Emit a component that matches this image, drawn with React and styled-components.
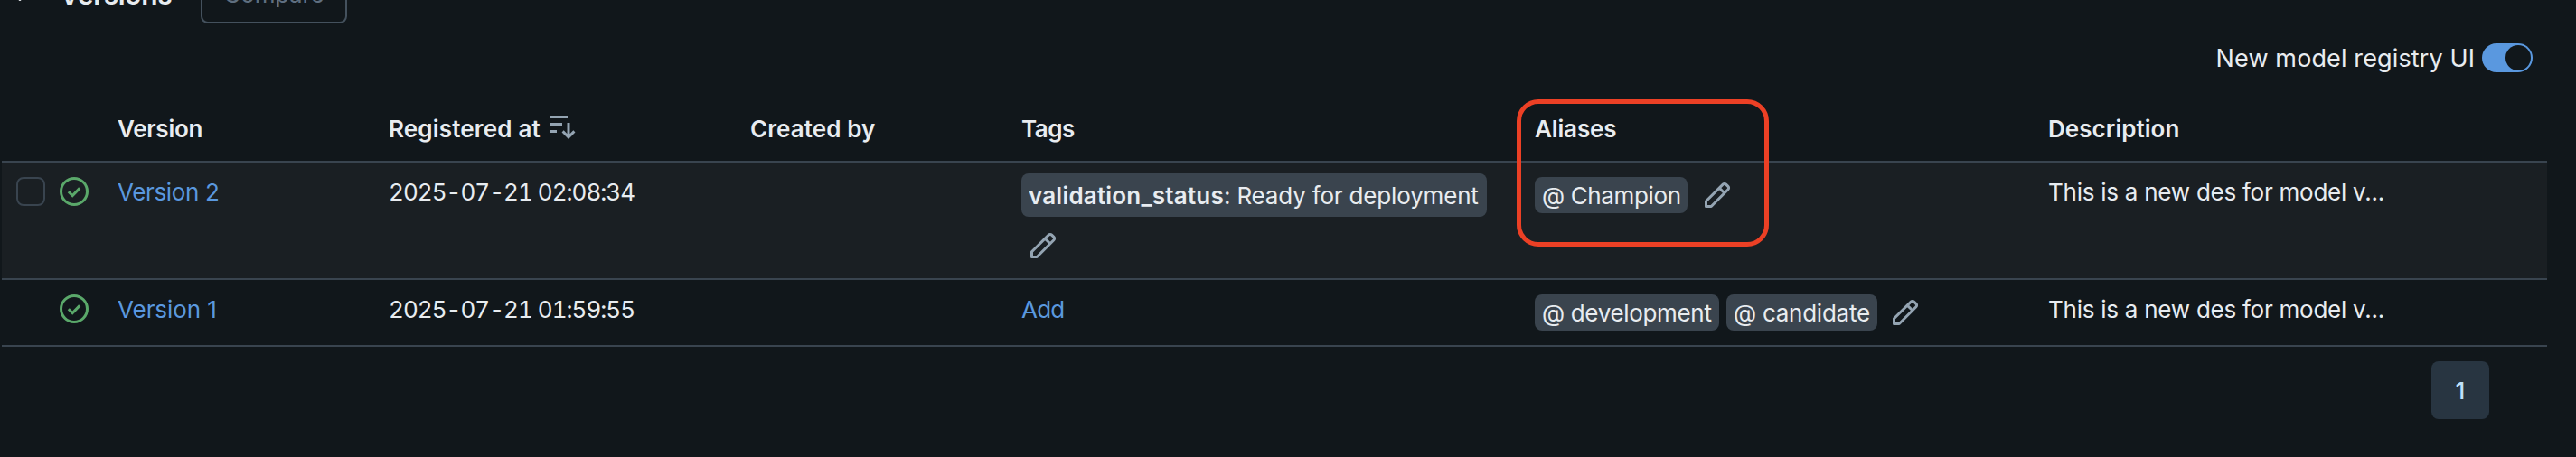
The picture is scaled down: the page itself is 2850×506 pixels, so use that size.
import React from "react";
import styled, { createGlobalStyle } from "styled-components";

const c = {
  bg: "#11171b",
  rowBg: "#1a1f23",
  text: "#e8ecf0",
  link: "#5a98df",
  line: "#39444f",
  badge: "#3a444e",
  icon: "#94a4b2",
  green: "#5aa86a",
  red: "#ec4025",
};

const Global = createGlobalStyle`
  body { margin: 0; background: ${c.bg}; }
  * { box-sizing: border-box; }
`;

const Page = styled.div`
  position: relative;
  width: 2850px;
  height: 506px;
  overflow: hidden;
  background: ${c.bg};
  color: ${c.text};
  font: 400 26px/40px Inter, "Liberation Sans", sans-serif;
  white-space: nowrap;
`;

const Toolbar = styled.header`
  display: flex;
  align-items: center;
  height: 64px;
  margin-top: -38px;
  padding-left: 12px;
`;

const Chevron = styled.svg`
  width: 20px;
  height: 12px;
  margin-top: 4px;
  flex: none;
`;

const Title = styled.h2`
  width: 156px;
  margin: 0 0 0 34px;
  font-size: 30px;
  font-weight: 600;
  line-height: 40px;
  letter-spacing: -0.35px;
`;

const CompareButton = styled.button`
  width: 162px;
  height: 64px;
  padding: 0;
  border: 2px solid #44515d;
  border-radius: 8px;
  background: transparent;
  color: #5f6f80;
  font: inherit;
  letter-spacing: -0.25px;
`;

const ToggleRow = styled.div`
  display: flex;
  align-items: center;
  justify-content: flex-end;
  gap: 8px;
  height: 32px;
  margin: 22px 48px 0 0;
  font-size: 27px;
`;

const ToggleLabel = styled.span`
  padding-top: 1px;
  letter-spacing: 0.12px;
`;

const Switch = styled.span`
  display: flex;
  justify-content: flex-end;
  width: 56px;
  height: 32px;
  padding: 2px;
  border-radius: 16px;
  background: ${c.link};
`;

const Knob = styled.span`
  width: 28px;
  height: 28px;
  border-radius: 50%;
  background: ${c.bg};
`;

const Table = styled.div`
  width: 2816px;
  margin: 0 0 0 2px;
`;

const Row = styled.div`
  display: grid;
  grid-template-columns: 128px 300px 400px 300px 568px 568px 1fr;
  height: ${(p) => p.$height}px;
  padding-top: ${(p) => p.$top}px;
  border-bottom: 2px solid ${c.line};
  background: ${(p) => (p.$active ? c.rowBg : "transparent")};
  font-weight: ${(p) => (p.$head ? 600 : 400)};
`;

const Cell = styled.div`
  line-height: 42px;
  letter-spacing: ${(p) => p.$spacing || 0}px;
`;

const DateCell = styled(Cell)`
  font-variant-numeric: tabular-nums;
`;

const HeadCell = styled.div`
  display: flex;
  gap: 10px;
  letter-spacing: ${(p) => p.$spacing || 0}px;
`;

const StatusCell = styled.div`
  display: flex;
  justify-content: flex-end;
  gap: 16px;
  padding: 4px 32px 0 0;
`;

const Checkbox = styled.span`
  width: 32px;
  height: 32px;
  border: 2px solid ${c.line};
  border-radius: 8px;
`;

const Link = styled.a`
  color: ${c.link};
`;

const BadgeCell = styled.div`
  display: flex;
  flex-wrap: wrap;
  align-items: flex-start;
  align-content: flex-start;
  gap: 8px;
  width: 540px;
  padding-top: ${(p) => p.$top || 0}px;
`;

const Badge = styled.span`
  width: ${(p) => p.$width}px;
  height: ${(p) => p.$height || 40}px;
  padding: 1px 0 0 8px;
  border-radius: 8px;
  background: ${c.badge};
  line-height: ${(p) => p.$height || 40}px;
  letter-spacing: ${(p) => p.$spacing || 0}px;
`;

const Key = styled.b`
  font-weight: 600;
  letter-spacing: 0.2px;
`;

const Pencil = styled.svg`
  width: 32px;
  height: 32px;
  margin: ${(p) => p.$margin || "4px 0 0 8px"};
`;

const Sort = styled.svg`
  width: 32px;
  height: 32px;
  margin-top: 3px;
`;

const Pager = styled.nav`
  display: flex;
  justify-content: flex-end;
  padding: 16px 96px 0 0;
`;

const PageButton = styled.button`
  width: 64px;
  height: 64px;
  padding: 2px 0 0;
  border: 0;
  border-radius: 8px;
  background: #283541;
  color: #bfe1fb;
  font: inherit;
  font-weight: 500;
`;

const Highlight = styled.div`
  position: absolute;
  left: 1678px;
  top: 110px;
  width: 279px;
  height: 163px;
  border: 5px solid ${c.red};
  border-radius: 24px;
`;

const EditIcon = ({ margin }) => (
  <Pencil viewBox="0 0 32 32" fill="none" stroke={c.icon} strokeWidth="3" $margin={margin}>
    <path d="M3.5 28.5V22.7L22.2 4.1a2.4 2.4 0 0 1 3.4 0l2.3 2.3a2.4 2.4 0 0 1 0 3.4L9.2 28.5ZM18.2 8.1l5.7 5.7" strokeLinejoin="round" />
  </Pencil>
);

const ReadyIcon = () => (
  <svg width="32" height="32" viewBox="0 0 32 32" fill="none" stroke={c.green} strokeWidth="3">
    <circle cx="16" cy="16" r="14.5" />
    <path d="M9.8 16.2 14.2 20.6 22.2 12.4" />
  </svg>
);

const SortIcon = () => (
  <Sort viewBox="0 0 32 32" fill="none" stroke={c.icon} strokeWidth="3">
    <path d="M0 3.5h20M0 11.5h14M0 19.5h8M21 10v15M14.6 19.4 21 25.8l6.4-6.4" />
  </Sort>
);

export default function App() {
  return (
    <Page>
      <Global />
      <Toolbar>
        <Chevron viewBox="0 0 20 12" fill="none" stroke={c.text} strokeWidth="3" strokeLinejoin="round">
          <path d="M2 1.5 10 9.5 18 1.5" />
        </Chevron>
        <Title>Versions</Title>
        <CompareButton>Compare</CompareButton>
      </Toolbar>
      <ToggleRow>
        <ToggleLabel>New model registry UI</ToggleLabel>
        <Switch><Knob /></Switch>
      </ToggleRow>
      <Table>
        <Row $head $height={100} $top={43}>
          <span />
          <HeadCell $spacing={-0.25}>Version</HeadCell>
          <HeadCell $spacing={0.17}>Registered at <SortIcon /></HeadCell>
          <HeadCell $spacing={0.08}>Created by</HeadCell>
          <HeadCell $spacing={-0.5}>Tags</HeadCell>
          <HeadCell $spacing={-0.14}>Aliases</HeadCell>
          <HeadCell $spacing={0.05}>Description</HeadCell>
        </Row>
        <Row $active $height={130} $top={12}>
          <StatusCell><Checkbox /><ReadyIcon /></StatusCell>
          <Cell $spacing={-0.36}><Link>Version 2</Link></Cell>
          <DateCell $spacing={-0.98}>2025-07-21 02:08:34</DateCell>
          <span />
          <BadgeCell>
            <Badge $width={515} $height={48} $spacing={-0.17}><Key>validation_status</Key>: Ready for deployment</Badge>
            <EditIcon margin="8px 0 0 8px" />
          </BadgeCell>
          <BadgeCell $top={4}>
            <Badge $width={169} $spacing={-0.36}>@ Champion</Badge>
            <EditIcon margin="4px 0 0 9px" />
          </BadgeCell>
          <Cell $spacing={-0.25}>This is a new des for model v...</Cell>
        </Row>
        <Row $height={74} $top={12}>
          <StatusCell><ReadyIcon /></StatusCell>
          <Cell $spacing={-0.07}><Link>Version 1</Link></Cell>
          <DateCell $spacing={-0.98}>2025-07-21 01:59:55</DateCell>
          <span />
          <Cell $spacing={-0.75}><Link>Add</Link></Cell>
          <BadgeCell $top={4}>
            <Badge $width={204} $spacing={-0.33}>@ development</Badge>
            <Badge $width={167} $spacing={-0.26}>@ candidate</Badge>
            <EditIcon margin="4px 0 0 7px" />
          </BadgeCell>
          <Cell $spacing={-0.25}>This is a new des for model v...</Cell>
        </Row>
      </Table>
      <Pager><PageButton>1</PageButton></Pager>
      <Highlight />
    </Page>
  );
}
